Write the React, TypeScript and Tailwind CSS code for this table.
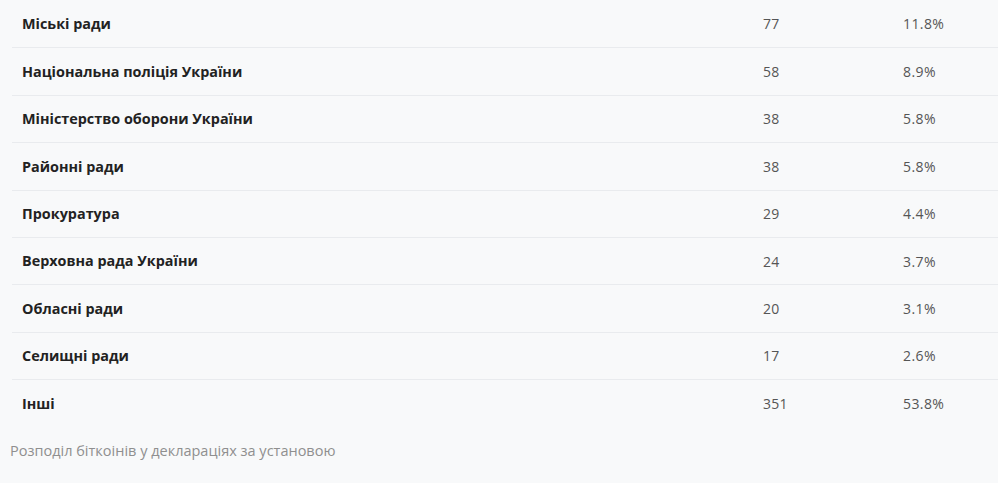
import React from "react";

const rows: [string, string, string][] = [
  ["Міські ради", "77", "11.8%"],
  ["Національна поліція України", "58", "8.9%"],
  ["Міністерство оборони України", "38", "5.8%"],
  ["Районні ради", "38", "5.8%"],
  ["Прокуратура", "29", "4.4%"],
  ["Верховна рада України", "24", "3.7%"],
  ["Обласні ради", "20", "3.1%"],
  ["Селищні ради", "17", "2.6%"],
  ["Інші", "351", "53.8%"],
];

export default function App() {
  return (
    <div
      className="w-[998px] h-[483px] bg-[#f8f9fa] overflow-hidden"
      style={{ fontFamily: '"Open Sans", "Noto Sans", sans-serif' }}
    >
      <div className="ml-[12px] w-[986px]">
        {rows.map(([name, n, p], i) => (
          <div
            key={i}
            className={`flex items-center h-[47.4px] ${i > 0 ? "border-t border-[#e9ebee]" : ""}`}
          >
            <div className="w-[741px] pl-[10px] text-[14.4px] font-bold text-[#222]">{name}</div>
            <div className="w-[140px] pl-[10px] text-[14px] tracking-[0.2px] text-[#555]">{n}</div>
            <div className="flex-1 pl-[10px] text-[14px] tracking-[0.4px] text-[#555]">{p}</div>
          </div>
        ))}
      </div>
      <div className="mt-[13px] pl-[10px] text-[14.5px] text-[#8f8f8f]">
        Розподіл біткоінів у деклараціях за установою
      </div>
    </div>
  );
}
